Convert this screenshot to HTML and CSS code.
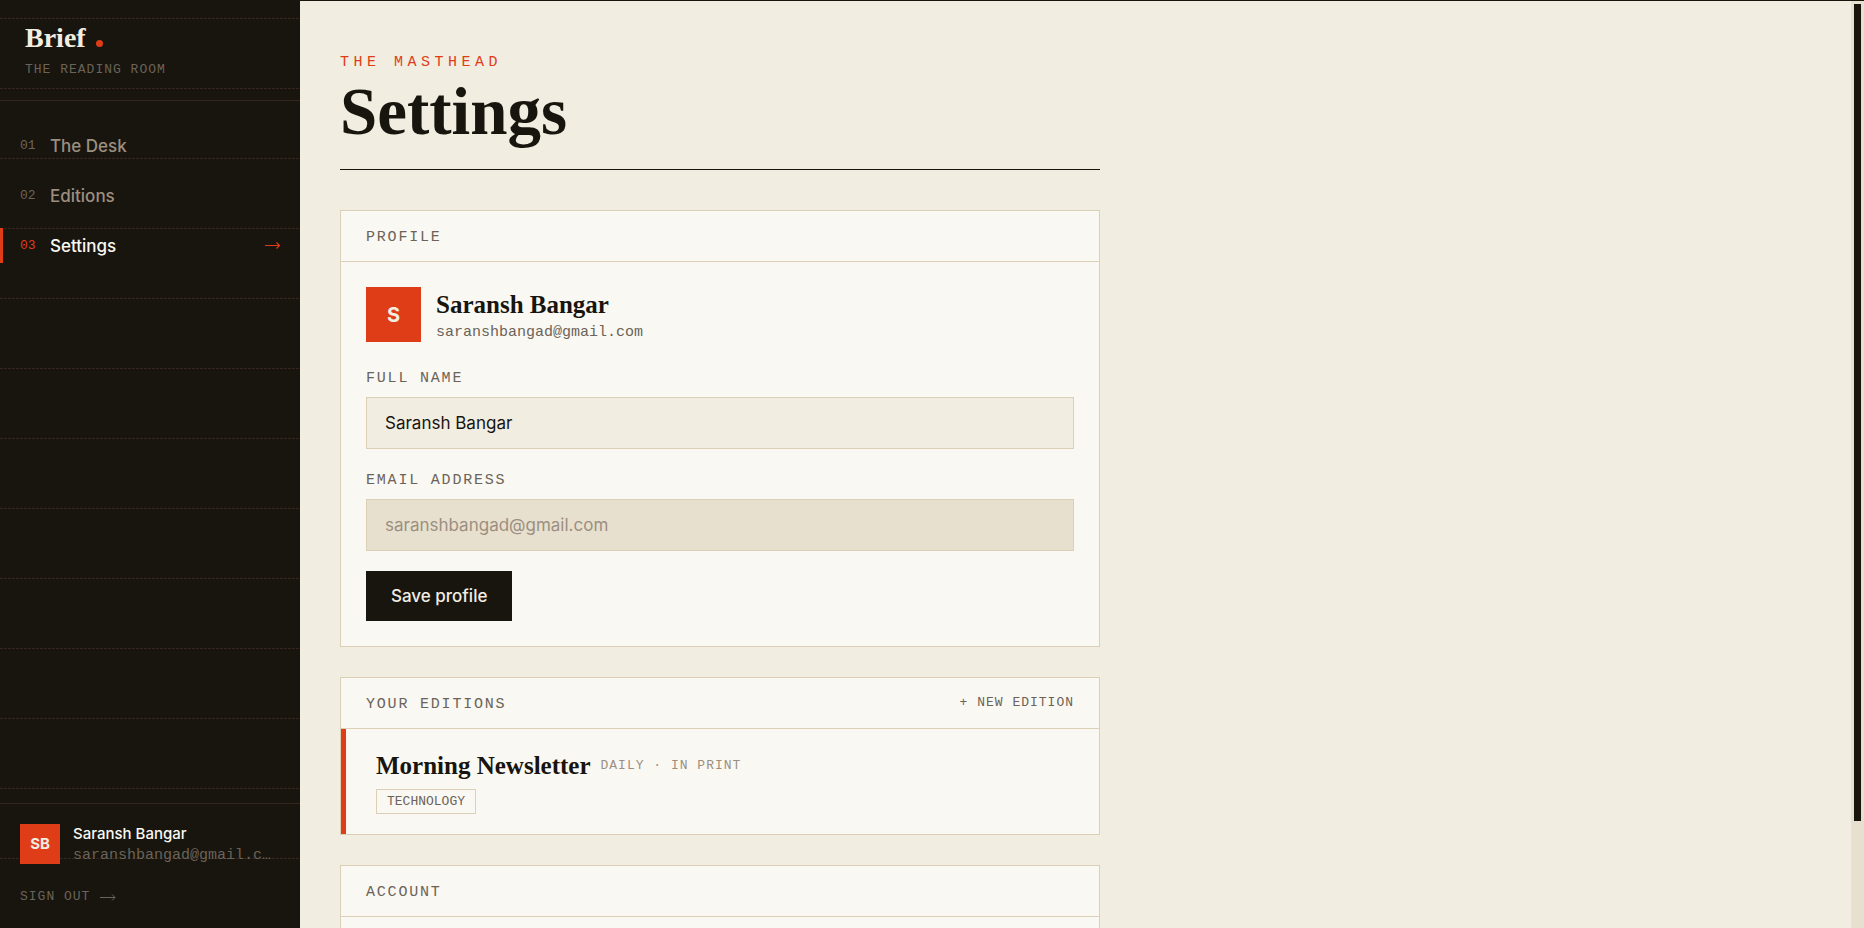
FILE: index.html
```html
<!DOCTYPE html>
<html lang="en">
<head>
    <meta charset="UTF-8">
    <title>Settings - Brief</title>
    <link rel="stylesheet" href="styles.css">
</head>
<body>
<aside class="sidebar">
    <div class="brand">
        <a class="logo" href="#">Brief<span class="dot"></span></a>
        <p class="tagline">The Reading Room</p>
    </div>
    <nav class="nav">
        <a href="#"><span class="num">01</span>The Desk</a>
        <a href="#"><span class="num">02</span>Editions</a>
        <a href="#" class="active"><span class="num">03</span>Settings
            <svg class="arrow" width="16" height="9" viewBox="0 0 16 9"><path d="M0 4.500H15M11.500 1.500L14.500 4.500L11.500 7.500" fill="none" stroke="currentColor" stroke-width="1.200"/></svg>
        </a>
    </nav>
    <div class="account">
        <div class="user">
            <div class="avatar small">SB</div>
            <div class="user-text">
                <p class="user-name">Saransh Bangar</p>
                <p class="user-mail">saranshbangad@gmail.com</p>
            </div>
        </div>
        <button class="signout" type="button">Sign out
            <svg class="arrow" width="16" height="8" viewBox="0 0 16 8"><path d="M0 4.500H15M12 1.500L15 4.500L12 7.500" fill="none" stroke="currentColor"/></svg>
        </button>
    </div>
</aside>
<main class="main">
    <div class="page">
        <header class="page-head">
            <p class="kicker">The Masthead</p>
            <h1>Settings</h1>
        </header>
        <section class="card">
            <div class="card-head"><h2>Profile</h2></div>
            <form class="card-body">
                <div class="identity">
                    <div class="avatar">S</div>
                    <div class="identity-text">
                        <p class="title">Saransh Bangar</p>
                        <p class="mail">saranshbangad@gmail.com</p>
                    </div>
                </div>
                <label for="name">Full name</label>
                <input id="name" type="text" value="Saransh Bangar">
                <label for="email">Email address</label>
                <input id="email" type="email" value="saranshbangad@gmail.com" disabled>
                <button class="save" type="button">Save profile</button>
            </form>
        </section>
        <section class="card">
            <div class="card-head">
                <h2>Your editions</h2>
                <a class="new" href="#">+ New edition</a>
            </div>
            <div class="edition">
                <div class="edition-head">
                    <h3 class="title">Morning Newsletter</h3>
                    <span class="meta">Daily · In print</span>
                </div>
                <span class="tag">Technology</span>
            </div>
        </section>
        <section class="card">
            <div class="card-head"><h2>Account</h2></div>
            <div class="card-body"></div>
        </section>
    </div>
</main>
<div class="scrollbar"><div class="thumb"></div></div>
</body>
</html>
```

FILE: styles.css
```css
*{
    margin: 0;
    padding: 0;
    box-sizing: border-box;
}
:root{
    --ink: #18150f;
    --paper: #f2ede1;
    --card: #faf8f3;
    --sand: #e8e0cf;
    --line: #dccfb8;
    --red: #df3c18;
    --grey: #6b6358;
    --soft: #9c8f80;
    --rule: #33261f;
    --mono: "Liberation Mono", monospace;
    --serif: "Liberation Serif", serif;
}
body{
    display: flex;
    height: 100vh;
    overflow: hidden;
    background: var(--paper);
    color: var(--ink);
    font-family: Inter, sans-serif;
    font-size: 17px;
    line-height: 26px;
}
a{
    color: inherit;
    text-decoration: none;
}
button{
    border: 0;
    cursor: pointer;
}

/* sidebar */
.sidebar{
    width: 300px;
    flex: none;
    display: flex;
    flex-direction: column;
    background: repeating-linear-gradient(90deg, transparent 0 3px, var(--ink) 3px 4px),
        repeating-linear-gradient(var(--ink) 0 69px, var(--rule) 69px 70px) 0 -51px;
    background-color: var(--ink);
    color: var(--paper);
}
.brand{
    padding: 21px 25px;
    border-bottom: 1px solid var(--rule);
}
.logo{
    display: flex;
    align-items: baseline;
    gap: 10px;
    font: bold 28px/34px var(--serif);
}
.dot{
    width: 7px;
    height: 7px;
    border-radius: 50%;
    background: var(--red);
}
.tagline{
    margin-top: 6px;
    font: 13px/18px var(--mono);
    letter-spacing: 1px;
    text-transform: uppercase;
    color: var(--grey);
}
.nav{
    flex: 1;
    display: flex;
    flex-direction: column;
    gap: 15px;
    padding-top: 27px;
}
.nav a{
    display: flex;
    align-items: center;
    height: 35px;
    padding: 0 19px 0 17px;
    border-left: 3px solid transparent;
    font-weight: 500;
    color: var(--soft);
}
.num{
    width: 30px;
    font: 13px/18px var(--mono);
    color: var(--grey);
}
.nav .active{
    border-color: var(--red);
    color: var(--card);
}
.active .num{
    color: var(--red);
}
.nav .arrow{
    margin-left: auto;
    color: var(--red);
}
.account{
    padding: 20px;
    border-top: 1px solid var(--rule);
}
.user{
    display: flex;
    gap: 13px;
}
.avatar{
    width: 55px;
    height: 55px;
    flex: none;
    display: flex;
    align-items: center;
    justify-content: center;
    background: var(--red);
    color: var(--paper);
    font-size: 20px;
    font-weight: 700;
}
.avatar.small{
    width: 40px;
    height: 40px;
    font-size: 15px;
}
.user-text{
    min-width: 0;
}
.user-name{
    font-size: 15px;
    line-height: 20px;
    font-weight: 500;
    color: var(--card);
}
.user-mail{
    overflow: hidden;
    text-overflow: ellipsis;
    white-space: nowrap;
    font: 15px/24px var(--mono);
    color: var(--grey);
}
.signout{
    display: flex;
    align-items: center;
    gap: 10px;
    margin-top: 18px;
    background: none;
    font: 13px/22px var(--mono);
    letter-spacing: 1px;
    text-transform: uppercase;
    color: var(--grey);
}

/* page */
.main{
    flex: 1;
    height: 100%;
    overflow: hidden;
    border-top: 1px solid var(--ink);
    padding: 50px 40px;
}
.page{
    max-width: 760px;
}
.page-head{
    margin-bottom: 40px;
    padding-bottom: 22px;
    border-bottom: 1px solid var(--ink);
}
.kicker{
    font: 15px/24px var(--mono);
    letter-spacing: 0.3em;
    text-transform: uppercase;
    color: var(--red);
}
h1{
    font: bold 67px/72px var(--serif);
}
.card{
    margin-bottom: 30px;
    border: 1px solid var(--line);
    background: var(--card);
}
.card-head{
    display: flex;
    justify-content: space-between;
    padding: 15px 25px 11px;
    border-bottom: 1px solid var(--line);
}
.card-head h2, label{
    font: 15px/24px var(--mono);
    letter-spacing: 0.12em;
    text-transform: uppercase;
    color: var(--grey);
}
.new, .meta{
    font: 13px/20px var(--mono);
    letter-spacing: 1px;
    text-transform: uppercase;
    color: var(--grey);
}
.meta{
    color: var(--soft);
}
.card-body{
    display: flex;
    flex-direction: column;
    align-items: flex-start;
    padding: 25px;
}
.identity{
    display: flex;
    gap: 15px;
    margin-bottom: 22px;
}
.identity-text{
    padding-top: 2px;
}
.title{
    font: bold 25px/32px var(--serif);
}
.mail{
    font: 15px/24px var(--mono);
    color: var(--grey);
}
input{
    width: 100%;
    height: 52px;
    margin: 6px 0 20px;
    padding: 0 18px;
    border: 1px solid var(--line);
    background: var(--paper);
    color: var(--ink);
    font: 17px/26px Inter, sans-serif;
}
input:disabled{
    background: var(--sand);
    color: var(--soft);
}
.save{
    height: 50px;
    padding: 0 25px;
    background: var(--ink);
    color: var(--paper);
    font: 500 17px/26px Inter, sans-serif;
}
.edition{
    padding: 21px 30px 20px;
    border-left: 5px solid var(--red);
}
.edition-head{
    display: flex;
    align-items: center;
    gap: 10px;
    margin-bottom: 4px;
}
.tag{
    display: inline-block;
    padding: 0 10px;
    border: 1px solid var(--line);
    font: 13px/23px var(--mono);
    text-transform: uppercase;
    color: var(--grey);
}

.scrollbar{
    width: 13px;
    height: 100%;
    padding: 3px;
    border-top: 1px solid var(--ink);
    background: var(--sand);
}
.thumb{
    height: 88.7%;
    background: var(--ink);
}
```
